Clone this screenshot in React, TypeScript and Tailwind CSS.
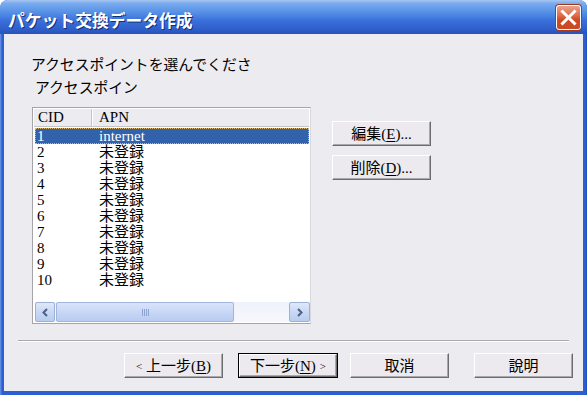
const ui = "font-['Liberation_Serif','Noto_Sans_CJK_JP',serif]";
const jp = "font-['Noto_Sans_CJK_JP','Liberation_Sans',sans-serif]";

function Btn({
  children,
  w = 99,
  def = false,
  className = "",
}: {
  children: React.ReactNode;
  w?: number;
  def?: boolean;
  className?: string;
}) {
  const inner = (
    <div
      className={`h-full w-full flex items-center justify-center border border-t-white border-l-white border-r-[#6d6d6d] border-b-[#6d6d6d] shadow-[inset_-1px_-1px_0_#a9a9ad] bg-[#eceaee] text-[15px] leading-[18px] text-black ${ui}`}
    >
      {children}
    </div>
  );
  return (
    <div
      className={`h-[25px] shrink-0 ${def ? "border border-black" : ""} ${className}`}
      style={{ width: w }}
    >
      {inner}
    </div>
  );
}

function CloseBtn() {
  return (
    <div className="w-[25px] h-[25px] rounded-[3px] border border-white bg-[linear-gradient(to_bottom,#e8a28c_0%,#dd6f4f_40%,#cf4a24_60%,#c94a26_100%)] flex items-center justify-center shadow-[0_0_0_1px_#9d3b22]">
      <svg width="17" height="17" viewBox="0 0 17 17">
        <path d="M2.5 2.5 L14.5 14.5 M14.5 2.5 L2.5 14.5" stroke="white" strokeWidth="3" strokeLinecap="square" />
      </svg>
    </div>
  );
}

function ScrollArrow({ dir }: { dir: "l" | "r" }) {
  return (
    <div className="w-full h-full rounded-[2px] border border-[#9fb0d4] bg-[linear-gradient(to_bottom,#dfe8fb_0%,#c9d8f5_50%,#b9ccf0_100%)] flex items-center justify-center">
      <svg width="8" height="9" viewBox="0 0 8 9">
        {dir === "l" ? (
          <path d="M6 1 L2.5 4.5 L6 8" stroke="#4d6185" strokeWidth="2" fill="none" />
        ) : (
          <path d="M2 1 L5.5 4.5 L2 8" stroke="#4d6185" strokeWidth="2" fill="none" />
        )}
      </svg>
    </div>
  );
}

export default function App() {
  const rows = [
    ["1", "internet"],
    ["2", "未登録"],
    ["3", "未登録"],
    ["4", "未登録"],
    ["5", "未登録"],
    ["6", "未登録"],
    ["7", "未登録"],
    ["8", "未登録"],
    ["9", "未登録"],
    ["10", "未登録"],
  ];
  return (
    <div className="w-[587px] h-[395px] bg-white">
      <div className="w-full h-full flex flex-col rounded-t-[8px] overflow-hidden bg-[linear-gradient(to_right,#6f9ae6_0px,#2c5fd3_2px,#2c5fd3_calc(100%-2px),#1f4fc0_100%)]">
        {/* Title bar */}
        <div className="h-[34px] shrink-0 flex items-center justify-between pl-[8px] pr-[6px] bg-[linear-gradient(to_bottom,#a7c7f3_0%,#79abee_10%,#5e97e8_30%,#4a85e3_45%,#3b70da_60%,#2f5fcb_85%,#2653bd_100%)]">
          <span
            className={`text-white font-bold text-[16.8px] leading-[20px] pt-[5px] [text-shadow:1px_1px_0_#0f2f7a] ${jp}`}
          >
            パケット交換データ作成
          </span>
          <CloseBtn />
        </div>
        {/* Client */}
        <div className="flex-1 mx-[4px] mb-[4px] bg-[#ecebef] flex flex-col">
          <div className={`ml-[27px] mt-[21px] text-[14.8px] leading-[18px] text-black ${jp}`}>
            アクセスポイントを選んでくださ
          </div>
          <div className={`ml-[31px] mt-[5px] text-[14.8px] leading-[18px] text-black ${jp}`}>
            アクセスポイン
          </div>
          <div className="flex mt-[11px] ml-[28px]">
            {/* List box */}
            <div className="w-[279px] h-[217px] border border-t-[#a5a4a8] border-l-[#a5a4a8] border-r-[#d8d7db] border-b-[#a5a4a8] p-px bg-white flex flex-col">
              <div className="h-[18px] flex shrink-0 bg-[#ecebef] border-b border-[#c5c4c8] text-[15px] leading-[17px]">
                <div className={`w-[58px] pl-[4px] border-r border-[#c5c4c8] shadow-[1px_0_0_#fff] ${ui}`}>CID</div>
                <div className={`flex-1 pl-[7px] ${ui}`}>APN</div>
              </div>
              <div className="mt-[1px] flex flex-col">
                {rows.map(([cid, apn], i) => (
                  <div
                    key={cid}
                    className={`h-[16px] flex text-[15px] leading-[16px] ml-[1px] ${ui} ${
                      i === 0
                        ? "bg-[#3162ab] text-white outline-1 outline-dotted outline-[#d7b56a] -outline-offset-1"
                        : "text-black"
                    }`}
                  >
                    <div className="w-[64px] pl-[2px]">{cid}</div>
                    <div>{apn}</div>
                  </div>
                ))}
              </div>
              <div className="flex-1" />
              <div className="h-[20px] flex ml-[1px] w-[275px] shrink-0 bg-[linear-gradient(to_bottom,#eef2fb,#f7f8fc)]">
                <div className="w-[20px] h-full">
                  <ScrollArrow dir="l" />
                </div>
                <div className="flex-1 h-full">
                  <div className="ml-[1px] w-[178px] h-full rounded-[2px] border border-[#a3b5dc] bg-[linear-gradient(to_bottom,#d9e4fa_0%,#c8d7f6_50%,#b8cbf1_100%)] flex items-center justify-center">
                    <svg width="7" height="7" viewBox="0 0 7 7">
                      <path d="M0.5 0 V7 M2.5 0 V7 M4.5 0 V7 M6.5 0 V7" stroke="#8ea3cf" strokeWidth="1" />
                    </svg>
                  </div>
                </div>
                <div className="w-[21px] h-full">
                  <ScrollArrow dir="r" />
                </div>
              </div>
            </div>
            {/* Side buttons */}
            <div className="ml-[21px] mt-[14px] flex flex-col gap-[9px]">
              <Btn w={99}>
                編集(<u className="underline-offset-2">E</u>)...
              </Btn>
              <Btn w={99}>
                削除(<u className="underline-offset-2">D</u>)...
              </Btn>
            </div>
          </div>
          {/* separator */}
          <div className="ml-[14px] mt-[16px] w-[551px] h-[2px] border-t border-[#aaa9ad] border-b border-b-white" />
          {/* bottom buttons */}
          <div className="flex mt-[11px]">
            <Btn w={99} className="ml-[120px]">
              <span className="text-[11px] mr-[4px]">&lt;</span>上一步(<u className="underline-offset-2">B</u>)
            </Btn>
            <Btn w={100} def className="ml-[15px]">
              下一步(<u className="underline-offset-2">N</u>)<span className="text-[11px] ml-[4px]">&gt;</span>
            </Btn>
            <Btn w={99} className="ml-[12px]">
              取消
            </Btn>
            <Btn w={99} className="ml-[25px]">
              說明
            </Btn>
          </div>
        </div>
      </div>
    </div>
  );
}
